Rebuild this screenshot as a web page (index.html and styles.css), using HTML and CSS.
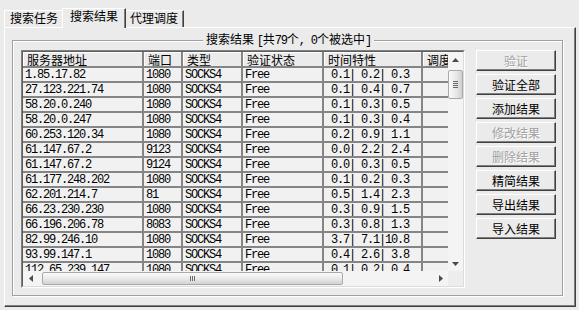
FILE: index.html
```html
<!DOCTYPE html>
<html lang="zh-CN">
<head>
<meta charset="utf-8">
<title>搜索结果</title>
<link rel="stylesheet" href="styles.css">
</head>
<body>
<div class="tabs">
  <div class="tab">搜索任务</div>
  <div class="tab sel">搜索结果</div>
  <div class="tab">代理调度</div>
</div>
<div class="panel">
  <fieldset class="group">
    <legend class="title">搜索结果 <span class="m">[</span>共<span class="m">79</span>个<span class="m">, 0</span>个被选中<span class="m">]</span></legend>
    <div class="group-body">
      <div class="lv">
        <div class="lv-in">
          <div class="lv-main">
            <div class="view">
              <div class="r h">
                <div class="c">服务器地址</div><div class="c">端口</div><div class="c">类型</div><div class="c">验证状态</div><div class="c">时间特性</div><div class="c">调度</div>
              </div>
              <div class="r"><div class="c">1.85.17.82</div><div class="c">1080</div><div class="c">SOCKS4</div><div class="c">Free</div><div class="c t"> 0.1| 0.2| 0.3</div><div class="c"></div></div>
              <div class="r"><div class="c">27.123.221.74</div><div class="c">1080</div><div class="c">SOCKS4</div><div class="c">Free</div><div class="c t"> 0.1| 0.4| 0.7</div><div class="c"></div></div>
              <div class="r"><div class="c">58.20.0.240</div><div class="c">1080</div><div class="c">SOCKS4</div><div class="c">Free</div><div class="c t"> 0.1| 0.3| 0.5</div><div class="c"></div></div>
              <div class="r"><div class="c">58.20.0.247</div><div class="c">1080</div><div class="c">SOCKS4</div><div class="c">Free</div><div class="c t"> 0.1| 0.3| 0.4</div><div class="c"></div></div>
              <div class="r"><div class="c">60.253.120.34</div><div class="c">1080</div><div class="c">SOCKS4</div><div class="c">Free</div><div class="c t"> 0.2| 0.9| 1.1</div><div class="c"></div></div>
              <div class="r"><div class="c">61.147.67.2</div><div class="c">9123</div><div class="c">SOCKS4</div><div class="c">Free</div><div class="c t"> 0.0| 2.2| 2.4</div><div class="c"></div></div>
              <div class="r"><div class="c">61.147.67.2</div><div class="c">9124</div><div class="c">SOCKS4</div><div class="c">Free</div><div class="c t"> 0.0| 0.3| 0.5</div><div class="c"></div></div>
              <div class="r"><div class="c">61.177.248.202</div><div class="c">1080</div><div class="c">SOCKS4</div><div class="c">Free</div><div class="c t"> 0.1| 0.2| 0.3</div><div class="c"></div></div>
              <div class="r"><div class="c">62.201.214.7</div><div class="c">81</div><div class="c">SOCKS4</div><div class="c">Free</div><div class="c t"> 0.5| 1.4| 2.3</div><div class="c"></div></div>
              <div class="r"><div class="c">66.23.230.230</div><div class="c">1080</div><div class="c">SOCKS4</div><div class="c">Free</div><div class="c t"> 0.3| 0.9| 1.5</div><div class="c"></div></div>
              <div class="r"><div class="c">66.196.206.78</div><div class="c">8083</div><div class="c">SOCKS4</div><div class="c">Free</div><div class="c t"> 0.3| 0.8| 1.3</div><div class="c"></div></div>
              <div class="r"><div class="c">82.99.246.10</div><div class="c">1080</div><div class="c">SOCKS4</div><div class="c">Free</div><div class="c t"> 3.7| 7.1|10.8</div><div class="c"></div></div>
              <div class="r"><div class="c">93.99.147.1</div><div class="c">1080</div><div class="c">SOCKS4</div><div class="c">Free</div><div class="c t"> 0.4| 2.6| 3.8</div><div class="c"></div></div>
              <div class="r"><div class="c">112.65.239.147</div><div class="c">1080</div><div class="c">SOCKS4</div><div class="c">Free</div><div class="c t"> 0.1| 0.2| 0.4</div><div class="c"></div></div>
            </div>
            <div class="vs">
              <div class="sb-btn"><svg width="7" height="4" viewBox="0 0 7 4"><polygon points="0,4 7,4 3.5,0"/></svg></div>
              <div class="vtrack">
                <div class="vthumb"><span></span><span></span><span></span><span></span></div>
              </div>
              <div class="sb-btn"><svg width="7" height="4" viewBox="0 0 7 4"><polygon points="0,0 7,0 3.5,4"/></svg></div>
            </div>
          </div>
          <div class="hs-row">
            <div class="hs">
              <div class="sb-btn h-btn"><svg width="4" height="7" viewBox="0 0 4 7"><polygon points="4,0 4,7 0,3.5"/></svg></div>
              <div class="htrack">
                <div class="hthumb"><span></span><span></span><span></span></div>
              </div>
              <div class="sb-btn h-btn"><svg width="4" height="7" viewBox="0 0 4 7"><polygon points="0,0 0,7 4,3.5"/></svg></div>
            </div>
            <div class="corner"></div>
          </div>
        </div>
      </div>
      <div class="btns">
        <button class="btn" disabled>验证</button>
        <button class="btn">验证全部</button>
        <button class="btn">添加结果</button>
        <button class="btn" disabled>修改结果</button>
        <button class="btn" disabled>删除结果</button>
        <button class="btn">精简结果</button>
        <button class="btn">导出结果</button>
        <button class="btn">导入结果</button>
      </div>
    </div>
  </fieldset>
</div>
</body>
</html>
```
FILE: styles.css
```css
html, body {
  margin: 0;
  padding: 0;
}
body {
  width: 579px;
  height: 310px;
  overflow: hidden;
  background: #ebebeb;
  color: #000;
  font: 12px/14px "Noto Sans CJK SC", "Noto Sans CJK JP", sans-serif;
}

/* tabs */
.tabs {
  display: flex;
  align-items: flex-end;
  height: 27px;
  padding-left: 4px;
  box-sizing: border-box;
}
.tab {
  height: 17px;
  box-sizing: border-box;
  padding: 0 5px;
  line-height: 14px;
  border-top: 1px solid #fff;
  border-left: 1px solid #fff;
  border-right: 1px solid #404040;
  box-shadow: inset -1px 0 #808080;
  background: #ebebeb;
  white-space: nowrap;
}
.tab.sel {
  position: relative;
  z-index: 1;
  height: 20px;
  padding: 0 7px;
  margin: 0 -2px -1px;
}

/* panel */
.panel {
  margin-left: 4px;
  width: 572px;
  height: 280px;
  box-sizing: border-box;
  border: 1px solid;
  border-color: #fff #404040 #404040 #fff;
  box-shadow: inset -1px -1px #808080;
  padding: 4px 0 0 7px;
}

.group {
  margin: 0;
  width: 551px;
  box-sizing: border-box;
  padding: 2px 6px 7px 8px;
  border: 1px solid #a0a0a0;
  box-shadow: inset 1px 1px #fff, 1px 1px #fff;
  min-inline-size: 0;
}
.title {
  margin: 0 auto;
  padding: 0 3px;
  line-height: 14px;
  background: #ebebeb;
  white-space: pre;
}
.m {
  font-family: "Liberation Mono", monospace;
  font-size: 12px;
  letter-spacing: -1.2px;
}

.group-body {
  display: flex;
  gap: 11px;
}

/* list view */
.lv {
  width: 444px;
  height: 238px;
  box-sizing: border-box;
  border: 1px solid;
  border-color: #808080 #fff #fff #808080;
}
.lv-in {
  height: 100%;
  box-sizing: border-box;
  border: 1px solid;
  border-color: #5e5e5e #dcdcdc #dcdcdc #5e5e5e;
  display: flex;
  flex-direction: column;
  background: #f1f1f1;
}
.lv-main {
  display: flex;
  height: 219px;
}
.view {
  width: 425px;
  overflow: hidden;
}
.r {
  display: grid;
  grid-template-columns: 121px 39px 60px 81px 99px 80px;
  height: 15px;
}
.c {
  height: 15px;
  box-sizing: border-box;
  border-right: 2px solid #858585;
  border-bottom: 2px solid #858585;
  padding-left: 2px;
  overflow: hidden;
  white-space: pre;
  font-family: "Liberation Mono", monospace;
  font-size: 12px;
  letter-spacing: -1.2px;
  line-height: 15px;
}
.c.t {
  padding-left: 1px;
}
.r.h {
  height: 16px;
}
.h .c {
  height: 16px;
  padding-left: 4px;
  font: 12px/15px "Noto Sans CJK SC", sans-serif;
  letter-spacing: 0;
  background: #ebebeb;
  box-shadow: inset 1px 1px #fff;
}

/* scrollbars */
.vs {
  width: 15px;
  display: flex;
  flex-direction: column;
  background: #f4f4f4;
}
.sb-btn {
  width: 15px;
  height: 15px;
  display: flex;
  align-items: center;
  justify-content: center;
  flex: none;
}
.sb-btn svg {
  fill: #4a4a4a;
  display: block;
}
.vtrack {
  flex: 1;
}
.vthumb {
  margin-top: 3px;
  height: 29px;
  box-sizing: border-box;
  border: 1px solid #a9a9a9;
  border-radius: 2px;
  background: linear-gradient(to right, #fafafa, #e6e6e6 60%, #cfcfcf);
  display: flex;
  flex-direction: column;
  align-items: center;
  justify-content: center;
  gap: 1px;
}
.vthumb span {
  width: 5px;
  height: 1px;
  background: #6a6a6a;
}
.hs-row {
  display: flex;
  height: 15px;
}
.hs {
  width: 425px;
  display: flex;
  background: #f4f4f4;
}
.h-btn {
  width: 15px;
}
.htrack {
  flex: 1;
  padding: 1px 0 1px 4px;
}
.hthumb {
  width: 301px;
  height: 13px;
  box-sizing: border-box;
  border: 1px solid #a9a9a9;
  border-radius: 2px;
  background: linear-gradient(to bottom, #fafafa, #e8e8e8 55%, #d2d2d2);
  display: flex;
  align-items: center;
  justify-content: center;
  gap: 1px;
}
.hthumb span {
  width: 1px;
  height: 5px;
  background: #6a6a6a;
}
.corner {
  width: 15px;
  background: #ededed;
}

/* buttons */
.btns {
  display: flex;
  flex-direction: column;
  gap: 3px;
  width: 80px;
}
.btn {
  width: 80px;
  height: 21px;
  margin: 0;
  padding: 0;
  box-sizing: border-box;
  border: 1px solid;
  border-color: #fff #404040 #404040 #fff;
  box-shadow: inset -1px -1px #808080;
  background: #ebebeb;
  color: #000;
  font: 12px/19px "Noto Sans CJK SC", sans-serif;
  text-align: center;
}
.btn:disabled {
  color: #a0a0a0;
  text-shadow: 1px 1px #fff;
}
```
